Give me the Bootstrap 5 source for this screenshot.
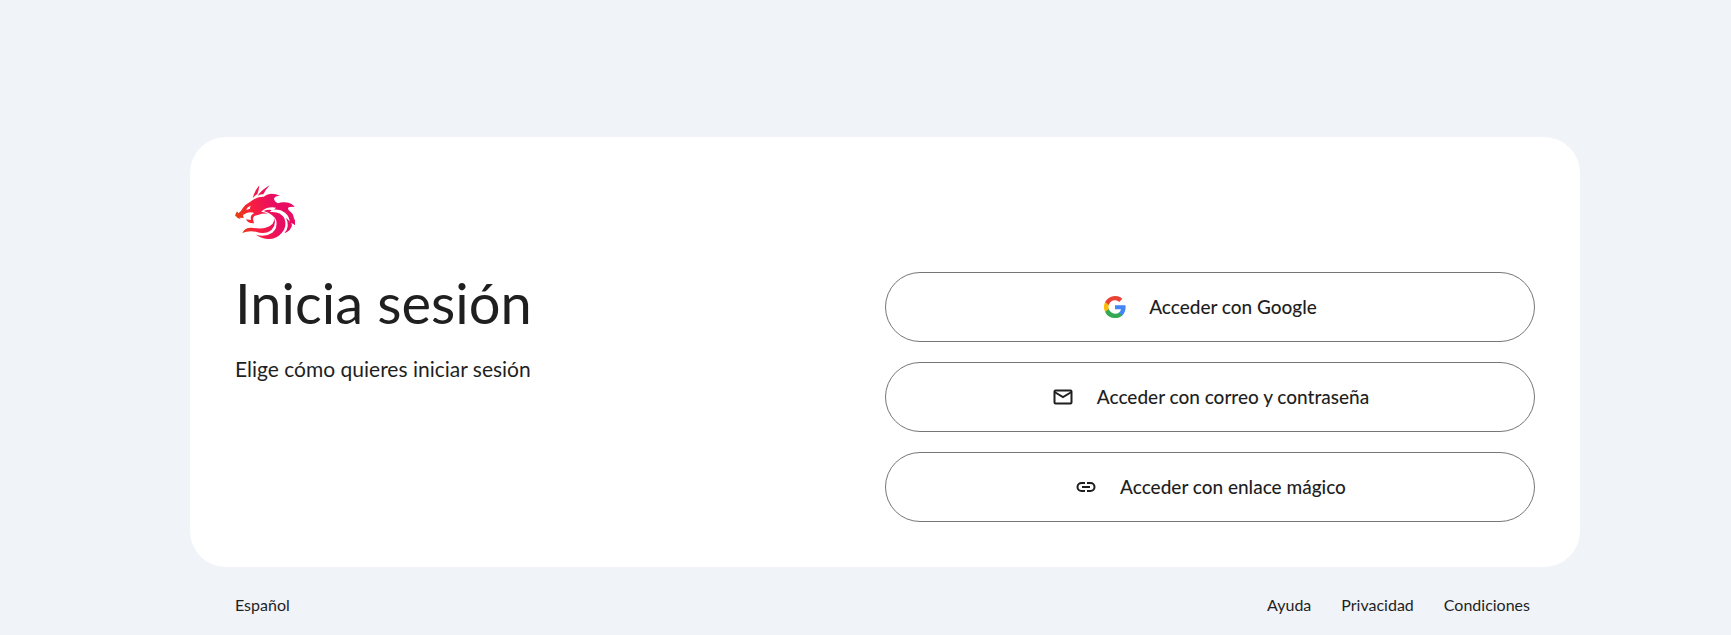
<!DOCTYPE html>
<html lang="es">
<head>
<meta charset="utf-8">
<meta name="viewport" content="width=device-width, initial-scale=1">
<title>Inicia sesión</title>
<link href="https://cdn.jsdelivr.net/npm/bootstrap@5.3.0/dist/css/bootstrap.min.css" rel="stylesheet">
<style>
  body { background: #f0f3f8; color: #1f1f1f; font-family: Lato, "Open Sans", sans-serif; }
  .login-page { padding: 137px 151px 0 190px; }
  .login-panel { border-radius: 36px; padding: 45px; }
  .brand-logo { width: 60px; height: 60px; }
  .login-title { font-size: 56px; line-height: 64px; font-weight: 400; margin: 29px 0 20px; }
  .login-lead { font-size: 21px; line-height: 28px; }
  .login-options { gap: 20px; padding-top: 90px; }
  .option-btn { height: 70px; border: 1px solid #747775; color: #1f1f1f; font-size: 19px; line-height: 28px; font-weight: 500; gap: 22px; }
  .option-btn:hover { background: #f5f8fc; }
  .login-footer { padding: 26px 50px 0 45px; font-size: 16px; line-height: 24px; }
  .login-footer a { color: #1f1f1f; text-decoration: none; }
  .footer-links { gap: 30px; }
  @media (max-width: 991px) { .login-page { padding: 24px; } .login-options { padding-top: 32px; } }
</style>
</head>
<body>
<div class="login-page">
  <main class="login-panel bg-white">
    <div class="row g-0">
      <div class="col-lg-6">
        <svg class="brand-logo d-block" viewBox="30 20 180 180" aria-hidden="true">
          <defs>
            <linearGradient id="flame" gradientUnits="userSpaceOnUse" x1="30" y1="120" x2="150" y2="90">
              <stop offset="0" stop-color="#e2420e"/><stop offset=".4" stop-color="#f9203c"/><stop offset="1" stop-color="#e80d62"/>
            </linearGradient>
          </defs>
          <g fill="url(#flame)">
            <path d="M83 69Q88 48 103 30Q102 43 97 56Q89 61 83 69Z"/>
            <path d="M98 61Q112 42 134 30Q121 44 115 57Q106 57 98 61Z"/>
            <path d="M30 120L36 108L40 114Q48 109 53 99Q60 87 76 79Q94 64 116 64Q124 56 138 55Q153 55 165 61Q150 62 147 69Q147 79 159 84Q168 80 180 81Q202 83 209 95Q197 93 189 97Q188 105 197 110Q207 117 206 127Q213 137 210 150Q203 142 194 144Q195 124 180 112Q166 101 147 103L153 97Q138 94 124 99Q113 104 108 110Q119 109 128 115Q111 114 99 119Q84 120 84 132L87 144Q68 145 63 132L78 134Q74 119 88 113Q76 109 65 113L54 119L56 128L43 127L48 132Q36 130 30 120Z"/>
            <path d="M116 107Q128 101 140 104L135 110Q166 107 178 129Q188 153 170 173Q154 192 128 191Q106 188 93 178Q122 186 142 172Q158 159 154 136Q147 117 116 107Z"/>
            <path d="M183 127Q196 154 178 174Q200 164 201 148Q194 136 183 127Z"/>
            <path d="M52 173Q60 154 87 158Q124 164 143 145Q149 135 147 127Q155 147 140 163Q121 179 93 169Q69 165 52 173Z"/>
          </g>
          <path d="M64 104Q65 95 78 91Q73 97 75 100Z" fill="#fff"/>
        </svg>
        <h1 class="login-title">Inicia sesión</h1>
        <p class="login-lead mb-0">Elige cómo quieres iniciar sesión</p>
      </div>
      <div class="col-lg-6 d-flex flex-column login-options">
        <button type="button" class="btn option-btn rounded-pill w-100 d-flex align-items-center justify-content-center">
          <svg width="24" height="24" viewBox="-1 -1 26 26" aria-hidden="true">
            <path fill="#4285f4" d="M23.5 12.3c0-.8-.1-1.6-.2-2.3H12v4.5h6.500a5.600 5.600 0 0 1-2.400 3.600v3h3.900c2.200-2.100 3.500-5.100 3.500-8.800z"/>
            <path fill="#34a853" d="M12 24c3.200 0 6-1.100 8-2.900l-3.900-3c-1.100.7-2.500 1.200-4.100 1.200-3.100 0-5.800-2.100-6.700-5H1.300v3.100A12 12 0 0 0 12 24z"/>
            <path fill="#fbbc05" d="M5.300 14.300a7.200 7.200 0 0 1 0-4.600V6.600h-4a12 12 0 0 0 0 10.800z"/>
            <path fill="#ea4335" d="M12 4.800c1.800 0 3.300.6 4.600 1.800L20 3.100A12 12 0 0 0 1.300 6.600l4 3.100c.9-2.900 3.600-4.900 6.700-4.900z"/>
          </svg>
          <span>Acceder con Google</span>
        </button>
        <button type="button" class="btn option-btn rounded-pill w-100 d-flex align-items-center justify-content-center">
          <svg width="24" height="24" viewBox="0 0 24 24" fill="none" stroke="#1f1f1f" stroke-width="2" aria-hidden="true">
            <rect x="3.500" y="5.500" width="17" height="13" rx="1"/><path d="M3.500 7L12 12l8.500-5"/>
          </svg>
          <span>Acceder con correo y contraseña</span>
        </button>
        <button type="button" class="btn option-btn rounded-pill w-100 d-flex align-items-center justify-content-center">
          <svg width="24" height="24" viewBox="0 0 24 24" fill="none" stroke="#1f1f1f" stroke-width="2" aria-hidden="true">
            <path d="M11 8H7.500a4 4 0 0 0 0 8H11M13 8h3.500a4 4 0 0 1 0 8H13M8 12h8"/>
          </svg>
          <span>Acceder con enlace mágico</span>
        </button>
      </div>
    </div>
  </main>
  <footer class="login-footer d-flex flex-wrap justify-content-between">
    <a href="#">Español</a>
    <nav class="footer-links d-flex" aria-label="Enlaces">
      <a href="#">Ayuda</a>
      <a href="#">Privacidad</a>
      <a href="#">Condiciones</a>
    </nav>
  </footer>
</div>
<script src="https://cdn.jsdelivr.net/npm/bootstrap@5.3.0/dist/js/bootstrap.bundle.min.js"></script>
</body>
</html>
